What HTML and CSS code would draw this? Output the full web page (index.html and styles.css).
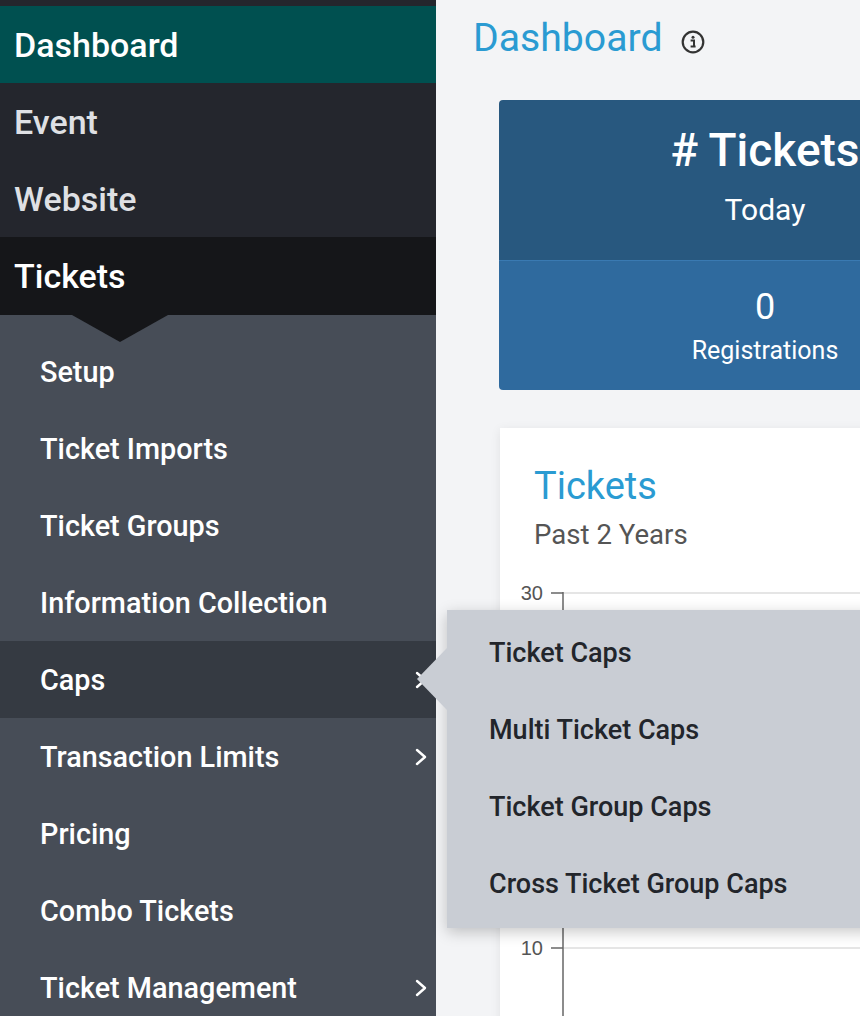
FILE: index.html
```html
<!DOCTYPE html>
<html lang="en">
<head>
<meta charset="utf-8">
<title>Dashboard</title>
<link rel="stylesheet" href="styles.css">
</head>
<body>
<aside class="sidebar">
  <div class="topstrip"></div>
  <nav class="mainnav">
    <div class="nav-item nav-dashboard">Dashboard</div>
    <div class="nav-item nav-plain">Event</div>
    <div class="nav-item nav-plain">Website</div>
    <div class="nav-item nav-tickets">Tickets</div>
  </nav>
  <ul class="subnav">
    <li class="sub-item">Setup</li>
    <li class="sub-item">Ticket Imports</li>
    <li class="sub-item">Ticket Groups</li>
    <li class="sub-item">Information Collection</li>
    <li class="sub-item sub-active">
      <span>Caps</span>
      <svg class="chev" width="14" height="22" viewBox="0 0 14 22"><path d="M3 4 L11 11 L3 18" fill="none" stroke="#fff" stroke-width="2.4" stroke-linecap="round" stroke-linejoin="round"/></svg>
      <div class="flyout">
        <div class="fly-item">Ticket Caps</div>
        <div class="fly-item">Multi Ticket Caps</div>
        <div class="fly-item">Ticket Group Caps</div>
        <div class="fly-item">Cross Ticket Group Caps</div>
      </div>
    </li>
    <li class="sub-item">
      <span>Transaction Limits</span>
      <svg class="chev" width="14" height="22" viewBox="0 0 14 22"><path d="M3 4 L11 11 L3 18" fill="none" stroke="#fff" stroke-width="2.4" stroke-linecap="round" stroke-linejoin="round"/></svg>
    </li>
    <li class="sub-item">Pricing</li>
    <li class="sub-item">Combo Tickets</li>
    <li class="sub-item">
      <span>Ticket Management</span>
      <svg class="chev" width="14" height="22" viewBox="0 0 14 22"><path d="M3 4 L11 11 L3 18" fill="none" stroke="#fff" stroke-width="2.4" stroke-linecap="round" stroke-linejoin="round"/></svg>
    </li>
  </ul>
</aside>
<main class="main">
  <header class="page-head">
    <h1 class="page-title">Dashboard</h1>
    <svg class="info" width="24" height="24" viewBox="0 0 24 24"><circle cx="12" cy="12" r="10.3" fill="none" stroke="#333" stroke-width="2.2"/><circle cx="12" cy="7.3" r="1.5" fill="#333"/><path d="M9.6 10.4 H13 V16.4 H14.6 M9.6 16.4 H14.6" fill="none" stroke="#333" stroke-width="2"/></svg>
  </header>
  <section class="stat-card">
    <div class="stat-top">
      <div class="stat-title"># Tickets</div>
      <div class="stat-sub">Today</div>
    </div>
    <div class="stat-bottom">
      <div class="stat-num">0</div>
      <div class="stat-label">Registrations</div>
    </div>
  </section>
  <section class="chart-card">
    <h2 class="chart-title">Tickets</h2>
    <div class="chart-sub">Past 2 Years</div>
    <svg class="chart" width="560" height="460" viewBox="0 0 560 460">
      <line x1="63" y1="17" x2="560" y2="17" stroke="#dcdcdc" stroke-width="1.5"/>
      <line x1="63" y1="194" x2="560" y2="194" stroke="#dcdcdc" stroke-width="1.5"/>
      <line x1="63" y1="372" x2="560" y2="372" stroke="#dcdcdc" stroke-width="1.5"/>
      <line x1="51" y1="17" x2="63" y2="17" stroke="#666" stroke-width="1.5"/>
      <line x1="51" y1="194" x2="63" y2="194" stroke="#666" stroke-width="1.5"/>
      <line x1="51" y1="372" x2="63" y2="372" stroke="#666" stroke-width="1.5"/>
      <line x1="63" y1="16" x2="63" y2="460" stroke="#666" stroke-width="1.5"/>
      <text x="43" y="24" text-anchor="end" class="tick">30</text>
      <text x="43" y="201" text-anchor="end" class="tick">20</text>
      <text x="43" y="379" text-anchor="end" class="tick">10</text>
    </svg>
  </section>
</main>
</body>
</html>
```

FILE: styles.css
```css
* { box-sizing: border-box; }
html, body {
  margin: 0;
  padding: 0;
  height: 1016px;
  overflow: hidden;
}
body {
  display: flex;
  font-family: Roboto, "Liberation Sans", sans-serif;
  background: #f3f4f6;
}
.sidebar {
  width: 436px;
  flex: 0 0 436px;
  background: #474d57;
  position: relative;
  z-index: 2;
}
.topstrip {
  height: 6px;
  background: #24262d;
}
.mainnav {
  display: flex;
  flex-direction: column;
}
.nav-item {
  height: 77px;
  display: flex;
  align-items: center;
  padding-left: 14px;
  font-size: 34px;
  font-weight: 500;
  color: #fff;
}
.nav-dashboard { background: #005050; }
.nav-plain { background: #24262d; color: #dfe0e4; }
.nav-tickets {
  background: #151619;
  position: relative;
  height: 78px;
}
.nav-tickets::after {
  content: "";
  position: absolute;
  left: 72px;
  top: 100%;
  border-left: 48px solid transparent;
  border-right: 48px solid transparent;
  border-top: 27px solid #151619;
}
.subnav {
  list-style: none;
  margin: 0;
  padding: 18px 0 0;
}
.sub-item {
  height: 77px;
  display: flex;
  align-items: center;
  justify-content: space-between;
  padding-left: 40px;
  padding-right: 8px;
  font-size: 28.8px;
  font-weight: 500;
  color: #fff;
  position: relative;
}
.sub-active { background: #353a42; }
.chev { display: block; }
.flyout {
  position: absolute;
  left: 447px;
  top: -31px;
  width: 460px;
  height: 318px;
  background: #c9cdd4;
  box-shadow: 0 4px 14px rgba(0,0,0,0.22);
  padding-top: 4px;
}
.flyout::before {
  content: "";
  position: absolute;
  left: -30px;
  top: 38px;
  border-top: 31px solid transparent;
  border-bottom: 31px solid transparent;
  border-right: 30px solid #c9cdd4;
}
.fly-item {
  height: 77px;
  display: flex;
  align-items: center;
  padding-left: 42px;
  font-size: 27px;
  font-weight: 500;
  color: #22252b;
}
.main {
  flex: 1;
  padding-left: 37px;
  min-width: 0;
}
.page-head {
  display: flex;
  align-items: center;
  height: 78px;
  gap: 18px;
  padding-bottom: 0;
}
.page-title {
  margin: 0;
  font-size: 39.2px;
  font-weight: 400;
  color: #2a9bd2;
  line-height: 1;
}
.info { margin-top: 6px; }
.stat-card {
  margin-left: 26px;
  margin-top: 22px;
  width: 532px;
  border-radius: 4px;
  overflow: hidden;
  color: #fff;
  text-align: center;
}
.stat-top {
  background: #28587f;
  height: 160px;
  padding-top: 22px;
}
.stat-title {
  font-size: 46px;
  font-weight: 500;
  line-height: 56px;
}
.stat-sub {
  font-size: 30px;
  line-height: 40px;
  margin-top: 12px;
}
.stat-bottom {
  background: #2f6a9e;
  border-top: 1px solid #3a7ab2;
  height: 130px;
  padding-top: 24px;
}
.stat-num {
  font-size: 36px;
  line-height: 44px;
}
.stat-label {
  font-size: 25px;
  line-height: 44px;
}
.chart-card {
  margin-left: 27px;
  margin-top: 38px;
  width: 560px;
  height: 700px;
  background: #fff;
  box-shadow: 0 2px 10px rgba(0,0,0,0.08);
  padding-top: 36px;
}
.chart-title {
  margin: 0 0 0 34px;
  font-size: 38px;
  font-weight: 400;
  color: #2a9bd2;
  line-height: 44px;
}
.chart-sub {
  margin-left: 34px;
  margin-top: 10px;
  font-size: 27.6px;
  color: #555;
  line-height: 34px;
}
.chart {
  display: block;
  margin-top: 24px;
}
.tick {
  font-family: "Liberation Sans", Arial, sans-serif;
  font-size: 20px;
  fill: #555;
}
```
